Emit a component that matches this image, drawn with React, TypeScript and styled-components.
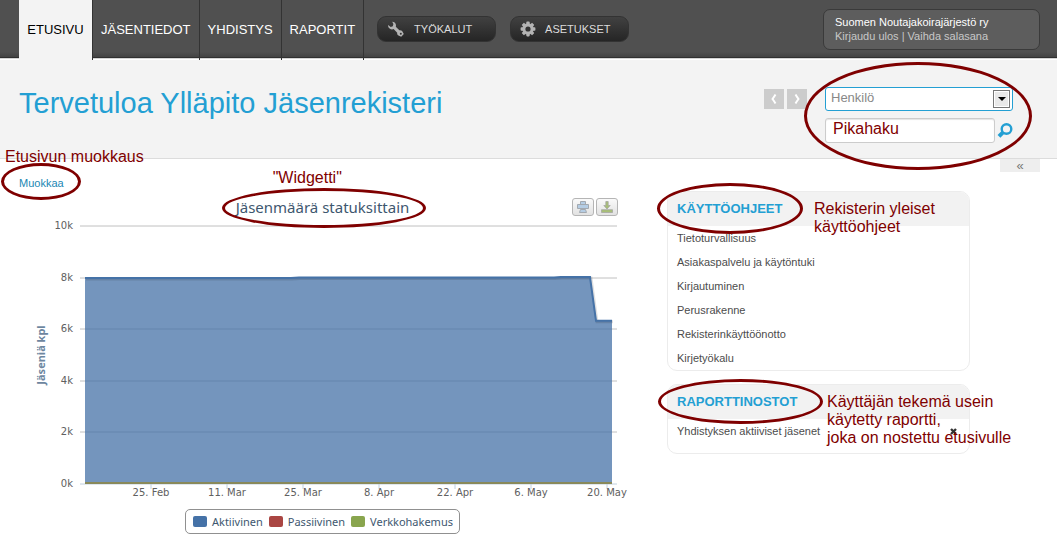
import React from 'react';
import styled, { createGlobalStyle } from 'styled-components';

const SANS = '"Liberation Sans", Arial, Helvetica, sans-serif';
const CHART = '"Noto Sans", "Open Sans", sans-serif';
const AXIS = '"DejaVu Sans", Verdana, sans-serif';
const BLUE = '#239fd3';
const MARK = '#7f0000';

const GlobalStyle = createGlobalStyle`
  *, *::before, *::after { box-sizing: border-box; }
  body { margin: 0; background: #fff; font: 11px/14px ${SANS}; color: #4c4c4c; }
  h1, h2, p, ul { margin: 0; padding: 0; font-weight: normal; }
  ul { list-style: none; }
  a { color: inherit; text-decoration: none; }
  button { border: 0; padding: 0; font: inherit; cursor: pointer; }
`;

/* ---- top bar ---- */

const TopBar = styled.header`
  display: flex;
  height: 60px;
  padding: 0 17px 0 19px;
  background: linear-gradient(
    #505050 0 52px, #434343 57px, #303030 57px 58px, #d4d4d4 58px 59px, #fff 59px
  );
`;

const Tabs = styled.nav`
  display: flex;
`;

const Tab = styled.a<{ $active?: boolean }>`
  min-width: 74px;
  padding: 0 8px;
  border-right: 1px solid #333;
  font-size: 13px;
  line-height: 60px;
  text-align: center;
  color: ${p => (p.$active ? '#000' : '#fff')};
  background: ${p => (p.$active ? '#f3f3f3' : 'transparent')};
`;

const Tools = styled.div`
  display: flex;
  gap: 14px;
  margin: 16px auto 0 13px;
`;

const ToolButton = styled.button`
  display: flex;
  align-items: center;
  gap: 9px;
  width: 119px;
  height: 26px;
  padding-left: 9px;
  border: 1px solid #333;
  border-radius: 9px;
  background: linear-gradient(#414141, #252525);
  color: #dcdcdc;
  svg { flex: none; }
`;

const UserBox = styled.div`
  width: 217px;
  height: 41px;
  margin-top: 9px;
  padding: 5px 11px;
  border: 1px solid #3a3a3a;
  border-radius: 7px;
  background: #5d5d5d;
  color: #c8c8c8;
`;

const UserName = styled.p`
  color: #fff;
`;

/* ---- heading band ---- */

const HeadBand = styled.section`
  display: flex;
  align-items: flex-start;
  height: 99px;
  padding: 27px 44px 0 19px;
  border-bottom: 1px solid #dcdcdc;
  background: #f3f3f3;
`;

const Title = styled.h1`
  flex: 1;
  font-size: 29px;
  line-height: 32px;
  color: ${BLUE};
`;

const Pager = styled.div`
  display: flex;
  gap: 3px;
  margin: 2px 18px 0 0;
`;

const PagerButton = styled.button`
  display: flex;
  align-items: center;
  justify-content: center;
  width: 20px;
  height: 20px;
  background: #ccc;
`;

const SearchForm = styled.form`
  position: relative;
  width: 188px;
`;

const SelectWrap = styled.div`
  position: relative;
`;

const Select = styled.select`
  display: block;
  width: 100%;
  height: 24px;
  padding: 0 24px 2px 5px;
  border: 1px solid ${BLUE};
  border-radius: 3px;
  appearance: none;
  background: #fff;
  font: 13px/20px ${SANS};
  color: #888;
`;

const SelectArrow = styled.span`
  position: absolute;
  top: 3px;
  right: 3px;
  display: flex;
  align-items: center;
  justify-content: center;
  width: 17px;
  height: 18px;
  border: 1px solid #777;
  background: #e9e9e9;
  box-shadow: inset 0 0 0 1px #fff;
  pointer-events: none;
`;

const SearchRow = styled.div`
  display: flex;
  align-items: center;
  justify-content: space-between;
  margin-top: 7px;
`;

const SearchInput = styled.input`
  width: 170px;
  height: 25px;
  padding: 0 7px;
  border: 1px solid #ccc;
  border-radius: 3px;
  background: #fff;
  box-shadow: inset 0 1px 1px #e4e4e4;
  font: 13px ${SANS};
`;

const IconButton = styled.button`
  display: flex;
  background: none;
`;

/* ---- content ---- */

const Content = styled.main`
  position: relative;
  display: flex;
  align-items: flex-start;
  gap: 41px;
  padding: 0 87px 6px 19px;
`;

const Collapse = styled.button`
  position: absolute;
  top: 0;
  right: 17px;
  width: 40px;
  height: 13px;
  background: #eee;
  font-size: 13px;
  line-height: 13px;
  color: #777;
`;

const ChartColumn = styled.section`
  flex: 1;
  min-width: 0;
`;

const EditRow = styled.div`
  position: relative;
  padding: 17px 0 6px;
  color: #2187b3;
`;

const ChartHead = styled.div`
  display: grid;
  grid-template-columns: 1fr auto 1fr;
  align-items: center;
  height: 22px;
`;

const ChartTitle = styled.h2`
  grid-column: 2;
  position: relative;
  font: 15px/20px ${CHART};
  color: #3e576f;
`;

const ExportButtons = styled.div`
  display: flex;
  justify-content: flex-end;
  gap: 2px;
  padding-right: 8px;
`;

const ExportButton = styled.button`
  display: flex;
  align-items: center;
  justify-content: center;
  width: 22px;
  height: 18px;
  border: 1px solid #b5b5b5;
  border-radius: 3px;
  background: linear-gradient(#fafafa, #e2e2e2);
`;

const Plot = styled.svg`
  display: block;
  width: 100%;
  height: auto;
  overflow: visible;
  font-family: ${AXIS};
  font-size: 10px;
  fill: #606060;
`;

const Legend = styled.ul`
  display: flex;
  gap: 6px;
  width: max-content;
  height: 25px;
  margin: 5px auto 0;
  padding: 0 6px 0 7px;
  border: 1px solid #909090;
  border-radius: 5px;
  font: 11px/23px ${CHART};
  color: #3e576f;
`;

const LegendItem = styled.li<{ $color: string }>`
  display: flex;
  align-items: center;
  gap: 5px;
  &::before {
    content: '';
    width: 14px;
    height: 11px;
    border-radius: 2px;
    background: ${p => p.$color};
  }
`;

const Sidebar = styled.aside`
  flex: none;
  display: grid;
  gap: 13px;
  width: 303px;
  padding-top: 32px;
`;

const Panel = styled.section`
  position: relative;
  border: 1px solid #ececec;
  border-radius: 10px;
`;

const PanelTitle = styled.h2`
  padding: 0 9px;
  border-radius: 9px 9px 0 0;
  background: #f2f2f2;
  font-size: 13px;
  font-weight: bold;
  line-height: 34px;
  color: ${BLUE};
`;

const PanelRow = styled.li`
  display: flex;
  align-items: center;
  justify-content: space-between;
  height: 24px;
  padding: 0 12px 0 9px;
`;

const ReportList = styled.ul`
  padding-bottom: 10px;
`;

/* ---- hand-drawn style notes laid over the page ---- */

interface Spot { $x: number; $y: number; $w?: number; $h?: number }

const Ring = styled.span<Spot>`
  position: absolute;
  z-index: 2;
  left: ${p => p.$x}px;
  top: ${p => p.$y}px;
  width: ${p => p.$w}px;
  height: ${p => p.$h}px;
  border: 3px solid ${MARK};
  border-radius: 50%;
  pointer-events: none;
`;

const Note = styled.span<Spot>`
  position: absolute;
  z-index: 2;
  left: ${p => p.$x}px;
  top: ${p => p.$y}px;
  font: 16px/18px ${SANS};
  color: ${MARK};
  white-space: pre;
  pointer-events: none;
`;

/* ---- drawings ---- */

const WrenchIcon = () => (
  <svg width="18" height="17" viewBox="0 0 18 17" aria-hidden="true">
    <path
      fill="#b4b4b4"
      d="M5.200.7C7.400.7 9 2.400 9 4.400c0 .5-.1.900-.2 1.300l3.600 3.500c1-.2 2 .1 2.700.8l1.700 3.100-2.600 2.700-3.200-1.600c-.7-.7-1-1.600-.8-2.500L6.600 8.100C4.400 9 1.800 7.800 1.200 5.500c-.1-.5-.1-1 0-1.500l2.500 2 2.100-.7.600-2.200z"
    />
    <circle cx="13.800" cy="12.800" r="1" fill="#333" />
  </svg>
);

const GearIcon = () => (
  <svg width="16" height="16" viewBox="-8 -8 16 16" aria-hidden="true">
    <g fill="#b4b4b4">
      {[0, 45, 90, 135].map(a => (
        <rect key={a} x="-1.700" y="-7.400" width="3.400" height="14.800" rx=".8" transform={`rotate(${a})`} />
      ))}
      <circle r="5.700" />
    </g>
    <circle r="2.600" fill="#333" />
  </svg>
);

const Chevron = ({ d }: { d: string }) => (
  <svg width="8" height="12" viewBox="0 0 8 12" aria-hidden="true">
    <path d={d} fill="none" stroke="#fff" strokeWidth="2" />
  </svg>
);

const SearchIcon = () => (
  <svg width="16" height="16" viewBox="0 0 16 16" aria-hidden="true">
    <circle cx="9.500" cy="6" r="4.800" fill="none" stroke={BLUE} strokeWidth="2.400" />
    <path d="M6.200 9.200 2 13.400" stroke={BLUE} strokeWidth="4" />
  </svg>
);

const PrintIcon = () => (
  <svg width="14" height="12" viewBox="0 0 14 12" aria-hidden="true">
    <g fill="#b5cde4" stroke="#a3a9b0">
      <path d="M4.500.500h5v3h-5zM1.500 3.500h11v4h-11zM4.500 8.500h5l1 3h-7z" />
    </g>
  </svg>
);

const DownloadIcon = () => (
  <svg width="12" height="12" viewBox="0 0 12 12" aria-hidden="true">
    <g fill="#a8bf77" stroke="#a0a0a0" strokeWidth=".7">
      <path d="M4.800.500h2.400v4h2L6 8 2.800 4.500h2zM.500 8.700h11v2.800H.500z" />
    </g>
  </svg>
);

const RemoveIcon = () => (
  <svg width="7" height="7" viewBox="0 0 7 7" aria-hidden="true">
    <path d="M1 1l5 5M6 1L1 6" stroke="#333" strokeWidth="2.400" />
  </svg>
);

/* ---- chart ---- */

const LEFT = 61;
const RIGHT = 598;
const BASE = 266;
const yOf = (k: number) => BASE - k * 25.8;
const ticks = ['25. Feb', '11. Mar', '25. Mar', '8. Apr', '22. Apr', '6. May', '20. May'];
const members: [number, number][] = [
  [66, 7.98], [272, 7.98], [280, 8], [535, 8], [542, 8.02], [571, 8.02], [577, 6.33], [593, 6.33],
];
const line = members.map(([x, k]) => `${x},${yOf(k)}`).join(' ');

const MemberChart = () => (
  <Plot viewBox="0 0 607 286" role="img" aria-label="Jäsenmäärä statuksittain">
    {[0, 2, 4, 6, 8, 10].map(k => (
      <g key={k}>
        <line x1={LEFT} x2={RIGHT} y1={Math.round(yOf(k))} y2={Math.round(yOf(k))} stroke={k ? '#c0c0c0' : '#c0d0e0'} />
        <text x="54" y={Math.round(yOf(k)) + 3} textAnchor="end">{k}k</text>
      </g>
    ))}
    <polygon points={`66,${BASE} ${line} 593,${BASE}`} fill="#4572a7" fillOpacity=".75" />
    <polyline points={line} transform="translate(1 1)" fill="none" stroke="#000" strokeOpacity=".12" strokeWidth="3" />
    <polyline points={line} fill="none" stroke="#4572a7" strokeWidth="2" />
    <line x1="66" x2="593" y1={BASE - 1} y2={BASE - 1} stroke="#89895a" strokeWidth="2" />
    {ticks.map((t, i) => (
      <g key={t}>
        <line x1={132 + i * 76} x2={132 + i * 76} y1={BASE} y2={BASE + 5} stroke="#c0d0e0" />
        <text x={132 + i * 76} y={BASE + 12} textAnchor="middle">{t}</text>
      </g>
    ))}
    <text
      transform="translate(26 137) rotate(-90)"
      textAnchor="middle"
      fontFamily={CHART}
      fontSize="11"
      fontWeight="bold"
      fill="#6d869f"
    >
      Jäseniä kpl
    </text>
  </Plot>
);

const guides = [
  'Tietoturvallisuus', 'Asiakaspalvelu ja käytöntuki', 'Kirjautuminen',
  'Perusrakenne', 'Rekisterinkäyttöönotto', 'Kirjetyökalu',
];

export default function App() {
  return (
    <>
      <GlobalStyle />
      <TopBar>
        <Tabs>
          <Tab href="#" $active>ETUSIVU</Tab>
          <Tab href="#">JÄSENTIEDOT</Tab>
          <Tab href="#">YHDISTYS</Tab>
          <Tab href="#">RAPORTIT</Tab>
        </Tabs>
        <Tools>
          <ToolButton type="button"><WrenchIcon />TYÖKALUT</ToolButton>
          <ToolButton type="button"><GearIcon />ASETUKSET</ToolButton>
        </Tools>
        <UserBox>
          <UserName>Suomen Noutajakoirajärjestö ry</UserName>
          <p><a href="#">Kirjaudu ulos</a> | <a href="#">Vaihda salasana</a></p>
        </UserBox>
      </TopBar>

      <HeadBand>
        <Title>Tervetuloa Ylläpito Jäsenrekisteri</Title>
        <Pager>
          <PagerButton type="button" aria-label="Edellinen"><Chevron d="M5.500 1.500Q4 4 2.500 6 4 8 5.500 10.500" /></PagerButton>
          <PagerButton type="button" aria-label="Seuraava"><Chevron d="M2.500 1.500Q4 4 5.500 6 4 8 2.500 10.500" /></PagerButton>
        </Pager>
        <SearchForm onSubmit={e => e.preventDefault()}>
          <SelectWrap>
            <Select aria-label="Hakukohde"><option>Henkilö</option></Select>
            <SelectArrow>
              <svg width="8" height="4" viewBox="0 0 8 4" aria-hidden="true"><path d="M0 0h8L4 4z" /></svg>
            </SelectArrow>
          </SelectWrap>
          <SearchRow>
            <SearchInput type="text" aria-label="Pikahaku" />
            <IconButton type="submit" aria-label="Hae"><SearchIcon /></IconButton>
          </SearchRow>
          <Note $x={8} $y={33}>Pikahaku</Note>
          <Ring $x={-21} $y={-25} $w={228} $h={108} />
        </SearchForm>
      </HeadBand>

      <Content>
        <Collapse type="button">«</Collapse>
        <ChartColumn>
          <EditRow>
            <a href="#">Muokkaa</a>
            <Note $x={-14} $y={-11}>Etusivun muokkaus</Note>
            <Ring $x={-18} $y={4} $w={80} $h={37} />
          </EditRow>
          <ChartHead>
            <ChartTitle>
              Jäsenmäärä statuksittain
              <Note $x={37} $y={-28}>"Widgetti"</Note>
              <Ring $x={-14} $y={-9} $w={204} $h={40} />
            </ChartTitle>
            <ExportButtons>
              <ExportButton type="button" aria-label="Tulosta"><PrintIcon /></ExportButton>
              <ExportButton type="button" aria-label="Lataa"><DownloadIcon /></ExportButton>
            </ExportButtons>
          </ChartHead>
          <MemberChart />
          <Legend>
            <LegendItem $color="#4572a7">Aktiivinen</LegendItem>
            <LegendItem $color="#aa4643">Passiivinen</LegendItem>
            <LegendItem $color="#89a54e">Verkkohakemus</LegendItem>
          </Legend>
        </ChartColumn>
        <Sidebar>
          <Panel>
            <PanelTitle>KÄYTTÖOHJEET</PanelTitle>
            <ul>
              {guides.map(g => <PanelRow key={g}><a href="#">{g}</a></PanelRow>)}
            </ul>
            <Ring $x={-11} $y={-9} $w={146} $h={51} />
            <Note $x={146} $y={8}>{'Rekisterin yleiset\nkäyttöohjeet'}</Note>
          </Panel>
          <Panel>
            <PanelTitle>RAPORTTINOSTOT</PanelTitle>
            <ReportList>
              <PanelRow>
                <a href="#">Yhdistyksen aktiiviset jäsenet</a>
                <IconButton type="button" aria-label="Poista"><RemoveIcon /></IconButton>
              </PanelRow>
            </ReportList>
            <Ring $x={-10} $y={-6} $w={165} $h={45} />
            <Note $x={159} $y={8}>{'Käyttäjän tekemä usein\nkäytetty raportti,\njoka on nostettu etusivulle'}</Note>
          </Panel>
        </Sidebar>
      </Content>
    </>
  );
}
